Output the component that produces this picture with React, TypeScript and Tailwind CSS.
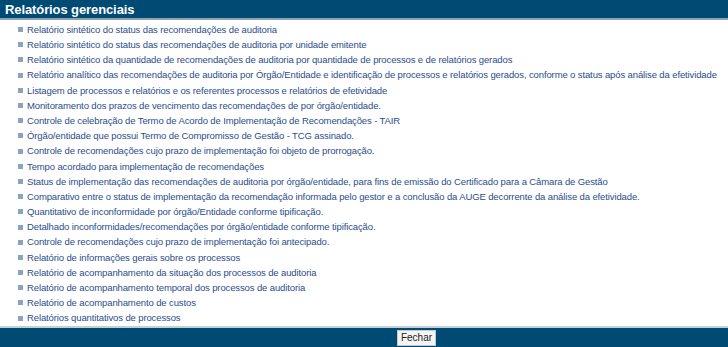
const items = [
  'Relatório sintético do status das recomendações de auditoria',
  'Relatório sintético do status das recomendações de auditoria por unidade emitente',
  'Relatório sintético da quantidade de recomendações de auditoria por quantidade de processos e de relatórios gerados',
  'Relatório analítico das recomendações de auditoria por Órgão/Entidade e identificação de processos e relatórios gerados, conforme o status após análise da efetividade',
  'Listagem de processos e relatórios e os referentes processos e relatórios de efetividade',
  'Monitoramento dos prazos de vencimento das recomendações de por órgão/entidade.',
  'Controle de celebração de Termo de Acordo de Implementação de Recomendações - TAIR',
  'Órgão/entidade que possui Termo de Compromisso de Gestão - TCG assinado.',
  'Controle de recomendações cujo prazo de implementação foi objeto de prorrogação.',
  'Tempo acordado para implementação de recomendações',
  'Status de implementação das recomendações de auditoria por órgão/entidade, para fins de emissão do Certificado para a Câmara de Gestão',
  'Comparativo entre o status de implementação da recomendação informada pelo gestor e a conclusão da AUGE decorrente da análise da efetividade.',
  'Quantitativo de inconformidade por órgão/Entidade conforme tipificação.',
  'Detalhado inconformidades/recomendações por órgão/entidade conforme tipificação.',
  'Controle de recomendações cujo prazo de implementação foi antecipado.',
  'Relatório de informações gerais sobre os processos',
  'Relatório de acompanhamento da situação dos processos de auditoria',
  'Relatório de acompanhamento temporal dos processos de auditoria',
  'Relatório de acompanhamento de custos',
  'Relatórios quantitativos de processos',
]

export default function App() {
  return (
    <div className="w-[728px] h-[347px] flex flex-col bg-white font-['Liberation_Sans',Arial,sans-serif]">
      <div className="h-[20px] bg-[#004b73] border-b-2 border-[#8ea3b2] flex items-center pl-[5px]">
        <h1 className="text-[13px] font-bold text-white leading-none tracking-[-0.1px]">Relatórios gerenciais</h1>
      </div>
      <ul className="flex-1 pt-[2px] pl-[18px]">
        {items.map((item) => (
          <li key={item} className="h-[15.2px] flex items-center gap-[4px] text-[9.5px] tracking-[-0.12px] text-[#2b4d8c] whitespace-nowrap">
            <span className="w-[5px] h-[5px] bg-[#8aa3c4] shrink-0" />
            <a href="#" className="leading-none">{item}</a>
          </li>
        ))}
      </ul>
      <div className="h-[21px] bg-[#004b73] border-t-2 border-[#c5cfd6] flex items-center pl-[397px]">
        <button className="h-[16px] w-[39px] bg-[#f4f4f4] border border-[#c8c8c8] text-[10px] text-[#222] leading-none">
          Fechar
        </button>
      </div>
    </div>
  )
}
